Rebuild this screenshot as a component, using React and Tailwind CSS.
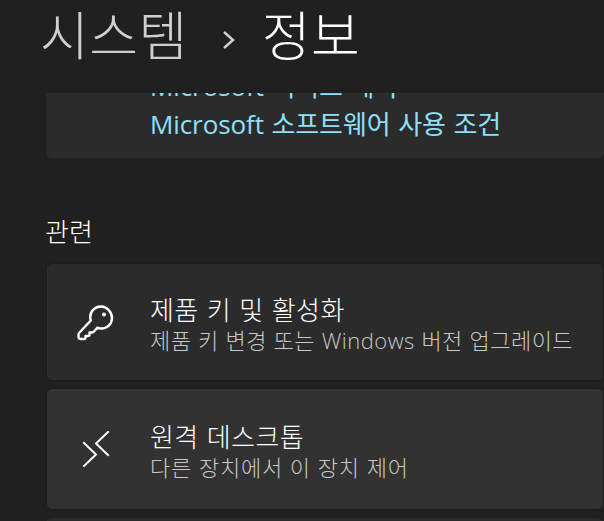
const KeyIcon = () => (
  <svg width="40" height="40" viewBox="0 0 40 40" fill="none" stroke="#fff" strokeWidth="2.4" strokeLinejoin="round" strokeLinecap="round">
    <path d="M25 4.500c-6 0-10.800 4.600-10.800 10.500 0 1.300.2 2.400.6 3.500L3.500 30.500c-.7.7-1 1.300-1 2.200v1.800c0 1.400 1 2.500 2.500 2.500h3c1 0 1.500-.5 1.500-1.500v-1.500h2.500c1 0 1.500-.5 1.500-1.500v-2h2.500c.8 0 1.300-.3 1.800-.8l3.400-4c1.300.5 2.600.8 4.300.8 6 0 10.500-4.800 10.500-10.500S31 4.500 25 4.500z" />
    <circle cx="28" cy="12.500" r="2" fill="#fff" stroke="none" />
  </svg>
);

const RemoteIcon = () => (
  <svg width="30" height="36" viewBox="0 0 30 36" fill="none" stroke="#fff" strokeWidth="2" strokeLinecap="square">
    <path d="M3 12l12 11.500L3 35" />
    <path d="M27 1L15 12.500 27 24" />
  </svg>
);

const SettingCard = ({ icon, title, desc, className, iconClass, descClass }) => (
  <div className={`flex items-center rounded-md border border-[#1c1c1c] ${className}`}>
    <div className={`w-[103px] flex justify-center shrink-0 ${iconClass}`}>{icon}</div>
    <div className="flex flex-col pt-[6px]">
      <span className="text-[26px] leading-[30px] text-white font-light tracking-[0.4px] [word-spacing:1px] whitespace-nowrap">{title}</span>
      <span className={`text-[22px] leading-[31px] text-[#c8c8c8] font-light [word-spacing:0.5px] whitespace-nowrap ${descClass}`}>{desc}</span>
    </div>
  </div>
);

const App = () => {
  return (
    <div
      className="h-[521px] w-[604px] overflow-hidden bg-[#202020] pl-[46px]"
      style={{ fontFamily: '"Open Sans", "Noto Sans CJK KR", sans-serif' }}
    >
      <div className="h-[93px] flex items-start -ml-[6px] text-[53px] leading-[71px] font-light whitespace-nowrap">
        <span className="text-[#cfcfcf] tracking-[0.5px]">시스템</span>
        <svg className="ml-[34px] mr-[26px] mt-[30px]" width="14" height="20" viewBox="0 0 14 20" fill="none" stroke="#cfcfcf" strokeWidth="2.500">
          <path d="M2 2l9 8-9 8" />
        </svg>
        <span className="text-white tracking-[0.5px]">정보</span>
      </div>

      <div className="h-[65px] bg-[#2b2b2b] overflow-hidden pl-[104px] rounded-b-md text-[26px] leading-[34px] text-[#8fe0fa] tracking-[-0.1px] [word-spacing:1px] whitespace-nowrap">
        <div className="-mt-[24px]">Microsoft 서비스 계약</div>
        <div className="mt-[4px]">Microsoft 소프트웨어 사용 조건</div>
      </div>

      <div className="mt-[62px] mb-[19px] text-[26px] leading-[24px] text-white -ml-[1px] font-light">관련</div>

      <SettingCard
        className="h-[118px] bg-[#2b2b2b]"
        iconClass="-ml-[3px] mr-[3px]"
        descClass="tracking-[0.47px]"
        icon={<KeyIcon />}
        title="제품 키 및 활성화"
        desc="제품 키 변경 또는 Windows 버전 업그레이드"
      />
      <SettingCard
        className="h-[122px] mt-[7px] bg-[#323232]"
        iconClass="-ml-[3px] mr-[3px]"
        descClass="tracking-[0.75px]"
        icon={<RemoteIcon />}
        title="원격 데스크톱"
        desc="다른 장치에서 이 장치 제어"
      />
      <div className="h-[40px] mt-[8px] rounded-md bg-[#2b2b2b]" />
    </div>
  );
};

export default App;
